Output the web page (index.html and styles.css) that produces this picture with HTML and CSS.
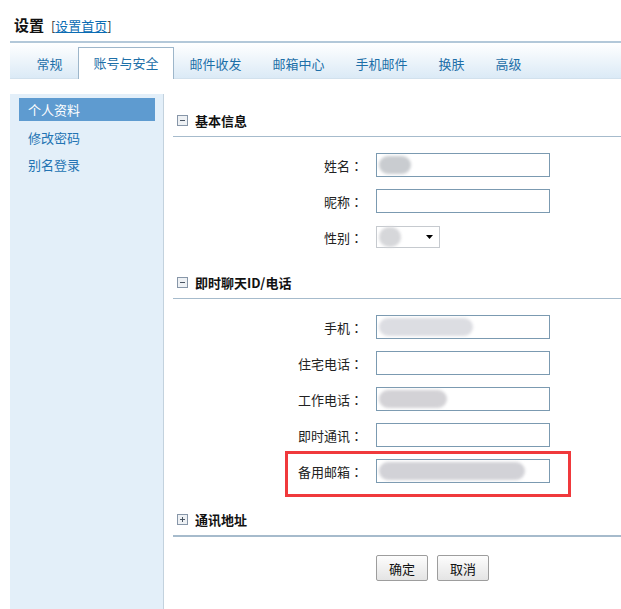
FILE: index.html
```html
<!DOCTYPE html>
<html lang="zh-CN">
<head>
    <meta charset="UTF-8">
    <meta name="viewport" content="width=device-width, initial-scale=1.0">
    <title>设置</title>
    <link rel="stylesheet" href="styles.css">
</head>
<body>

    <div class="title">
        <span class="title-main">设置</span>
        <span class="title-link">[<a href="#">设置首页</a>]</span>
    </div>

    <div class="tabbar">
        <a class="tab" href="#">常规</a>
        <a class="tab active" href="#">账号与安全</a>
        <a class="tab" href="#">邮件收发</a>
        <a class="tab" href="#">邮箱中心</a>
        <a class="tab" href="#">手机邮件</a>
        <a class="tab" href="#">换肤</a>
        <a class="tab" href="#">高级</a>
    </div>

    <div class="layout">
        <ul class="sidebar">
            <li class="active"><a href="#">个人资料</a></li>
            <li><a href="#">修改密码</a></li>
            <li><a href="#">别名登录</a></li>
        </ul>

        <div class="content">
            <div class="section-head">
                <svg class="toggle" width="11" height="11" viewBox="0 0 11 11"><rect x="0.5" y="0.5" width="10" height="10" fill="#eef1f4" stroke="#8796a8"/><rect x="3" y="5" width="5" height="1" fill="#4a5563"/></svg>
                基本信息
            </div>
            <div class="row">
                <label>姓名<span class="colon">：</span></label>
                <span class="field"><span class="blur" style="width: 32px; background: #c9ccd0;"></span></span>
            </div>
            <div class="row">
                <label>昵称<span class="colon">：</span></label>
                <span class="field"></span>
            </div>
            <div class="row">
                <label>性别<span class="colon">：</span></label>
                <span class="select">
                    <span class="blur small" style="width: 22px; background: #d6d7da;"></span>
                    <svg class="arrow" width="7" height="4" viewBox="0 0 7 4"><path d="M0 0H7L3.5 4Z" fill="#000"/></svg>
                </span>
            </div>

            <div class="section-head">
                <svg class="toggle" width="11" height="11" viewBox="0 0 11 11"><rect x="0.5" y="0.5" width="10" height="10" fill="#eef1f4" stroke="#8796a8"/><rect x="3" y="5" width="5" height="1" fill="#4a5563"/></svg>
                即时聊天ID/电话
            </div>
            <div class="row">
                <label>手机<span class="colon">：</span></label>
                <span class="field"><span class="blur" style="width: 94px; background: #dcdde2;"></span></span>
            </div>
            <div class="row">
                <label>住宅电话<span class="colon">：</span></label>
                <span class="field"></span>
            </div>
            <div class="row">
                <label>工作电话<span class="colon">：</span></label>
                <span class="field"><span class="blur" style="width: 68px; background: #d3d2d6;"></span></span>
            </div>
            <div class="row">
                <label>即时通讯<span class="colon">：</span></label>
                <span class="field"></span>
            </div>
            <div class="row marked">
                <label>备用邮箱<span class="colon">：</span></label>
                <span class="field"><span class="blur" style="width: 146px; background: #d2d2d7;"></span></span>
            </div>

            <div class="section-head closed">
                <svg class="toggle" width="11" height="11" viewBox="0 0 11 11"><rect x="0.5" y="0.5" width="10" height="10" fill="#eef1f4" stroke="#8796a8"/><rect x="3" y="5" width="5" height="1" fill="#4a5563"/><rect x="5" y="3" width="1" height="5" fill="#4a5563"/></svg>
                通讯地址
            </div>

            <div class="buttons">
                <button>确定</button>
                <button>取消</button>
            </div>
        </div>
    </div>

</body>
</html>
```

FILE: styles.css
```css
* {
    margin: 0;
    padding: 0;
    box-sizing: border-box;
}

body {
    font-family: "Noto Sans CJK SC", "Noto Sans", sans-serif;
    font-size: 13px;
    color: #222;
    background-color: #fff;
}

a {
    text-decoration: none;
}

.title {
    height: 41px;
    padding: 16px 0 0 14px;
    line-height: 18px;
}

.title-main {
    font-size: 15px;
    font-weight: bold;
    color: #111;
}

.title-link {
    margin-left: 4px;
    color: #333;
}

.title-link a {
    color: #0b6cb3;
    text-decoration: underline;
}

.tabbar {
    display: flex;
    align-items: flex-end;
    height: 38px;
    margin-left: 10px;
    padding-left: 11px;
    border-top: 2px solid #b3c8d9;
    border-bottom: 1px solid #d2e1ed;
    background: linear-gradient(#ffffff, #dbeaf6);
}

.tab {
    height: 31px;
    line-height: 30px;
    padding: 0 14.5px;
    color: #1d6fa8;
    border: 1px solid transparent;
    border-bottom: none;
    margin-bottom: -1px;
}

.tab.active {
    background-color: #fff;
    border-color: #9db6ca;
    height: 32px;
}

.layout {
    display: flex;
    margin-top: 15px;
    min-height: calc(100vh - 94px);
}

.sidebar {
    list-style: none;
    width: 154px;
    margin-left: 10px;
    padding-top: 4px;
    background-color: #e3eff9;
    border-right: 1px solid #c3d2de;
}

.sidebar li {
    margin: 0 8px 4.5px 9px;
    height: 23px;
    line-height: 23px;
}

.sidebar li a {
    display: block;
    padding-left: 9px;
    color: #2273b3;
}

.sidebar li.active {
    background-color: #5e9bd0;
}

.sidebar li.active a {
    color: #fff;
}

.content {
    flex: 1;
    margin-left: 9px;
    padding-top: 5px;
}

.section-head {
    display: flex;
    align-items: center;
    height: 38px;
    padding: 5px 0 0 4px;
    font-weight: bold;
    color: #111;
    border-bottom: 1px solid #a6bbcc;
    margin-bottom: 16px;
}

.section-head .toggle {
    margin-right: 7px;
}

.section-head.closed {
    margin-top: 16px;
    border-bottom-width: 2px;
    margin-bottom: 18px;
}

.row {
    position: relative;
    display: flex;
    align-items: center;
    height: 24px;
    margin-bottom: 12px;
}

.row label {
    width: 190px;
    text-align: right;
    margin-right: 13px;
    color: #222;
}

.row label .colon {
    display: inline-block;
    width: 13px;
    text-align: center;
    font-family: "Noto Sans CJK TC", sans-serif;
}

.field {
    display: flex;
    align-items: center;
    width: 174px;
    height: 24px;
    padding: 0 2px;
    border: 1px solid #7b9ab1;
    background-color: #fff;
}

.blur {
    display: block;
    height: 18px;
    border-radius: 9px;
    filter: blur(1.5px);
}

.blur.small {
    height: 20px;
    border-radius: 10px;
}

.select {
    display: flex;
    align-items: center;
    justify-content: space-between;
    width: 64px;
    height: 22px;
    padding: 0 6px 0 2px;
    border: 1px solid #c6cacf;
    background-color: #fff;
}

.row.marked::after {
    content: "";
    position: absolute;
    left: 112px;
    top: -8px;
    width: 280px;
    height: 40px;
    border: 3px solid #f0393c;
}

.buttons {
    display: flex;
    gap: 9px;
    padding-left: 203px;
}

.buttons button {
    width: 52px;
    height: 26px;
    font-family: inherit;
    font-size: 13px;
    color: #111;
    border: 1px solid #9d9d9d;
    border-radius: 2px;
    background: linear-gradient(#fdfdfd, #e4e4e4);
}
```
